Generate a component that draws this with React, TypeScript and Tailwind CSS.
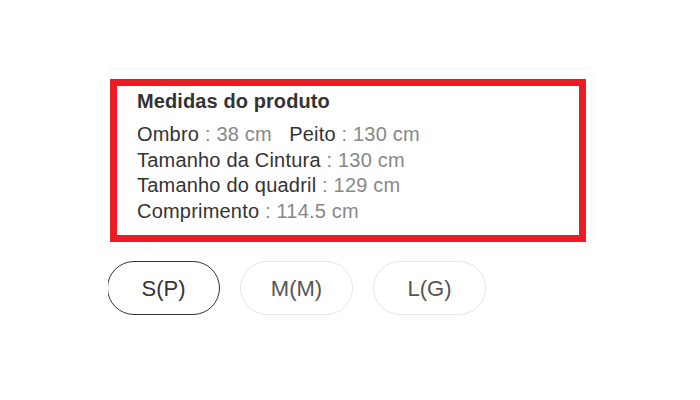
export default function App() {
  const rows: [string, string][][] = [
    [
      ["Ombro", "38 cm"],
      ["Peito", "130 cm"],
    ],
    [["Tamanho da Cintura", "130 cm"]],
    [["Tamanho do quadril", "129 cm"]],
    [["Comprimento", "114.5 cm"]],
  ];

  return (
    <div
      className="w-[700px] h-[400px] bg-white overflow-hidden"
      style={{ fontFamily: '"Liberation Sans", Arial, sans-serif' }}
    >
      <div className="ml-[108px] pt-[70px] w-[500px] overflow-hidden">
        {/* Tooltip card */}
        <div className="relative w-[482px] h-[176px] pt-[9px] bg-white shadow-[0_0_6px_rgba(0,0,0,0.07)]">
          <div className="ml-[2px] w-[476px] h-[163px] border-[7px] border-[#ec1c24] pl-[20px] pt-[2px]">
            <p className="text-[20px] leading-[26px] font-bold text-[#333] tracking-[0.1px]">Medidas do produto</p>
            <div className="mt-[8px]">
              {rows.map((row, i) => (
                <p key={i} className="text-[20px] leading-[25.7px] text-[#333] tracking-[0.2px] whitespace-pre">
                  {row.map(([label, value], j) => (
                    <span key={j}>
                      {j > 0 && "   "}
                      {label}
                      <span className="text-[#888]"> : {value}</span>
                    </span>
                  ))}
                </p>
              ))}
            </div>
          </div>
          {/* arrow */}
          <div className="absolute top-full left-[39px] w-0 h-0 border-l-[8px] border-r-[8px] border-t-[8px] border-l-transparent border-r-transparent border-t-[#f0f0f0]" />
          <div className="absolute top-full left-[40px] w-0 h-0 border-l-[7px] border-r-[7px] border-t-[7px] border-l-transparent border-r-transparent border-t-white" />
        </div>

        {/* Size options */}
        <div className="flex gap-[20px] mt-[15px] -ml-[1px]">
          <button className="w-[113px] h-[54px] rounded-full border border-[#333] text-[22px] text-[#333]">
            S(P)
          </button>
          <button className="w-[113px] h-[54px] rounded-full border border-[#e6e6e6] text-[22px] text-[#555]">
            M(M)
          </button>
          <button className="w-[113px] h-[54px] rounded-full border border-[#e6e6e6] text-[22px] text-[#555]">
            L(G)
          </button>
        </div>
      </div>
    </div>
  );
}
